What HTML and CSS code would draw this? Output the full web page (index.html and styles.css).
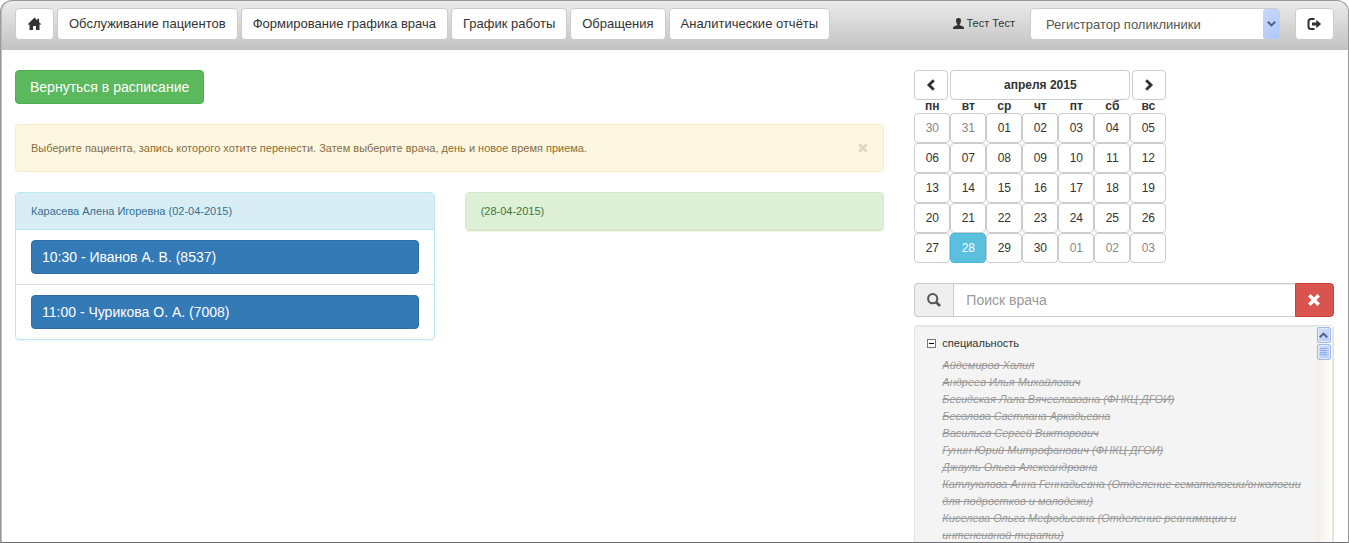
FILE: index.html
```html
<!DOCTYPE html>
<html lang="ru">
<head>
<meta charset="utf-8">
<title>Перенос записи</title>
<link rel="stylesheet" href="styles.css">
</head>
<body>
<div class="app">
  <header class="topbar">
    <nav class="nav">
      <button class="btn nav-btn" type="button" aria-label="Главная"><svg class="icon" width="15" height="14" viewBox="0 0 14 14"><path d="M7 0.5 L0 7.6 H2 V13 H5.6 V9 H8.4 V13 H12 V7.6 H14 L11.6 5.2 V1.8 H9.8 V3.4 Z"/></svg></button>
      <button class="btn nav-btn" type="button">Обслуживание пациентов</button>
      <button class="btn nav-btn" type="button">Формирование графика врача</button>
      <button class="btn nav-btn" type="button">График работы</button>
      <button class="btn nav-btn" type="button">Обращения</button>
      <button class="btn nav-btn" type="button">Аналитические отчёты</button>
    </nav>
    <div class="session">
      <span class="user"><svg class="icon" width="11" height="11" viewBox="0 0 11 11"><path d="M5.5 0 C7.4 0 8.2 1.2 8 3 C7.9 4.5 7.3 5.6 6.7 6.2 V7.1 L10 8.6 C10.8 9 11 9.6 11 11 H0 C0 9.6 .2 9 1 8.6 L4.3 7.1 V6.2 C3.7 5.6 3.1 4.5 3 3 C2.8 1.2 3.6 0 5.5 0 Z"/></svg>Тест Тест</span>
      <div class="role">
        <select class="role-select" aria-label="Роль"><option>Регистратор поликлиники</option></select>
        <span class="role-arrow"><svg width="9" height="6" viewBox="0 0 9 6"><path d="M0.8 0.8 L4.5 4.4 L8.2 0.8" fill="none" stroke="#4d6185" stroke-width="2"/></svg></span>
      </div>
      <button class="btn nav-btn" type="button" aria-label="Выход"><svg class="icon" width="15" height="12" viewBox="0 0 14 12"><path d="M7 1 H3.5 Q1 1 1 3.5 V8.5 Q1 11 3.5 11 H7" fill="none" stroke="#333" stroke-width="2"/><path d="M4.5 4.5 H8.8 V1.8 L13.6 6 L8.8 10.2 V7.5 H4.5 Z"/></svg></button>
    </div>
  </header>

  <main class="columns">
    <section class="col">
      <button class="btn btn-success" type="button">Вернуться в расписание</button>
      <div class="alert">
        <span>Выберите пациента, запись которого хотите перенести. Затем выберите врача, день и новое время приема.</span>
        <button class="alert-close" type="button" aria-label="Закрыть"><svg width="10" height="10" viewBox="0 0 10 10"><path d="M1.2 1.2 L8.8 8.8 M8.8 1.2 L1.2 8.8" stroke="#e2d9bd" stroke-width="3"/></svg></button>
      </div>
      <div class="panels">
        <div class="panel panel-info">
          <div class="panel-heading">Карасева Алена Игоревна (02-04-2015)</div>
          <ul class="appointments">
            <li><button class="btn btn-primary" type="button">10:30 - Иванов А. В. (8537)</button></li>
            <li><button class="btn btn-primary" type="button">11:00 - Чурикова О. А. (7008)</button></li>
          </ul>
        </div>
        <div class="panel panel-success">
          <div class="panel-heading">(28-04-2015)</div>
        </div>
      </div>
    </section>

    <aside class="col side">
      <div class="calendar">
        <div class="calendar-head">
          <button class="btn cal-nav" type="button" aria-label="Предыдущий месяц"><svg class="icon" width="10" height="12" viewBox="0 0 10 12"><path d="M7.8 1.3 L3 6 L7.8 10.7" fill="none" stroke="#333" stroke-width="2.9"/></svg></button>
          <button class="btn cal-title" type="button">апреля 2015</button>
          <button class="btn cal-nav" type="button" aria-label="Следующий месяц"><svg class="icon" width="10" height="12" viewBox="0 0 10 12"><path d="M2.2 1.3 L7 6 L2.2 10.7" fill="none" stroke="#333" stroke-width="2.9"/></svg></button>
        </div>
        <table class="days">
          <thead><tr><th>пн</th><th>вт</th><th>ср</th><th>чт</th><th>пт</th><th>сб</th><th>вс</th></tr></thead>
          <tbody>
            <tr><td><button class="btn day muted">30</button></td><td><button class="btn day muted">31</button></td><td><button class="btn day">01</button></td><td><button class="btn day">02</button></td><td><button class="btn day">03</button></td><td><button class="btn day">04</button></td><td><button class="btn day">05</button></td></tr>
            <tr><td><button class="btn day">06</button></td><td><button class="btn day">07</button></td><td><button class="btn day">08</button></td><td><button class="btn day">09</button></td><td><button class="btn day">10</button></td><td><button class="btn day">11</button></td><td><button class="btn day">12</button></td></tr>
            <tr><td><button class="btn day">13</button></td><td><button class="btn day">14</button></td><td><button class="btn day">15</button></td><td><button class="btn day">16</button></td><td><button class="btn day">17</button></td><td><button class="btn day">18</button></td><td><button class="btn day">19</button></td></tr>
            <tr><td><button class="btn day">20</button></td><td><button class="btn day">21</button></td><td><button class="btn day">22</button></td><td><button class="btn day">23</button></td><td><button class="btn day">24</button></td><td><button class="btn day">25</button></td><td><button class="btn day">26</button></td></tr>
            <tr><td><button class="btn day">27</button></td><td><button class="btn day selected">28</button></td><td><button class="btn day">29</button></td><td><button class="btn day">30</button></td><td><button class="btn day muted">01</button></td><td><button class="btn day muted">02</button></td><td><button class="btn day muted">03</button></td></tr>
          </tbody>
        </table>
      </div>

      <div class="search">
        <label class="search-addon" for="doctor" aria-label="Поиск"><svg width="14" height="14" viewBox="0 0 14 14"><circle cx="5.7" cy="5.7" r="4.6" fill="none" stroke="#555" stroke-width="2"/><path d="M9 9 L13 13" stroke="#555" stroke-width="2.6"/></svg></label>
        <input class="search-input" id="doctor" type="text" placeholder="Поиск врача">
        <button class="btn btn-danger" type="button" aria-label="Очистить"><svg width="12" height="12" viewBox="0 0 12 12"><path d="M1.3 1.3 L10.7 10.7 M10.7 1.3 L1.3 10.7" stroke="#fff" stroke-width="3.6"/></svg></button>
      </div>

      <div class="doctors">
        <div class="tree">
          <div class="tree-head"><button class="toggle" type="button" aria-label="Свернуть"></button><span>специальность</span></div>
          <ul class="tree-list">
            <li>Айдемиров Халил</li>
            <li>Андреев Илья Михайлович</li>
            <li>Бесидская Лала Вячеславовна (ФНКЦ ДГОИ)</li>
            <li>Бесолова Светлана Аркадьевна</li>
            <li>Васильев Сергей Викторович</li>
            <li>Гунин Юрий Митрофанович (ФНКЦ ДГОИ)</li>
            <li>Джауль Ольга Александровна</li>
            <li>Катлуюлова Анна Геннадьевна (Отделение гематологии/онкологии для подростков и молодежи)</li>
            <li>Киселева Ольга Мефодьевна (Отделение реанимации и интенсивной терапии)</li>
          </ul>
        </div>
        <div class="scrollbar">
          <div class="scroll-btn"><svg width="9" height="6" viewBox="0 0 9 6"><path d="M0.8 5.2 L4.5 1.6 L8.2 5.2" fill="none" stroke="#4d6185" stroke-width="2"/></svg></div>
          <div class="scroll-btn"><svg width="8" height="8" viewBox="0 0 8 8"><path d="M0 .5 H7 M0 2.5 H7 M0 4.5 H7 M0 6.5 H7" stroke="#8caee8"/></svg></div>
        </div>
      </div>
    </aside>
  </main>
</div>
</body>
</html>
```
FILE: styles.css
```css
* { box-sizing: border-box; }

body {
  margin: 0;
  background: #fff;
  color: #333;
  font: 11px/16px "Liberation Sans", Arial, sans-serif;
}

.app {
  display: flex;
  flex-direction: column;
  height: 100vh;
  overflow: hidden;
  border-radius: 12px 12px 0 0;
}

/* Window outline laid over the page edges */
.app::after {
  content: "";
  position: fixed;
  inset: 0;
  border: 1px solid #9a9a9a;
  border-bottom-color: #6e6e72;
  border-radius: 12px 12px 0 0;
  box-shadow: inset 1px 0 0 #bcbcbc;
  pointer-events: none;
}

.icon { fill: #333; }

.btn {
  display: inline-flex;
  align-items: center;
  justify-content: center;
  margin: 0;
  padding: 6px 14px;
  border: 1px solid #ccc;
  border-radius: 4px;
  background: #fff;
  color: #333;
  font: 14px/20px "Liberation Sans", Arial, sans-serif;
  white-space: nowrap;
}

.topbar {
  display: flex;
  flex: none;
  justify-content: space-between;
  height: 50px;
  padding: 8px 15px 0;
  background: linear-gradient(#ececec, #c2c2c2);
}

.nav { display: flex; align-items: flex-start; gap: 3px; }
.nav-btn { height: 32px; padding: 6px 11px; font-size: 13px; line-height: 18px; }

.session { display: flex; align-items: flex-start; gap: 15px; }
.user { display: flex; align-items: center; gap: 2px; height: 30px; }

.role { position: relative; width: 250px; height: 32px; }
.role-select {
  width: 100%;
  height: 100%;
  padding: 0 15px;
  border: 1px solid #ccc;
  border-radius: 4px;
  appearance: none;
  background: #fff;
  color: #555;
  font: 13px "Liberation Sans", Arial, sans-serif;
}
.role-arrow {
  position: absolute;
  top: 1px;
  right: 1px;
  bottom: 1px;
  display: flex;
  align-items: center;
  justify-content: center;
  width: 16px;
  border-radius: 2px;
  background: linear-gradient(135deg, #c9d8fc, #aec8f7);
  pointer-events: none;
}

.columns {
  display: grid;
  flex: 1;
  grid-template-columns: 2fr 1fr;
  min-height: 0;
  padding-top: 20px;
}
.col { min-width: 0; min-height: 0; padding: 0 15px; }
.side { display: flex; flex-direction: column; }

.btn-success { border-color: #4cae4c; background: #5cb85c; color: #fff; }
.btn-danger { width: 39px; padding: 0; border-color: #d43f3a; border-radius: 0 4px 4px 0; background: #d9534f; }

.alert {
  display: flex;
  align-items: center;
  justify-content: space-between;
  margin: 20px 0;
  padding: 15px;
  border: 1px solid #faebcc;
  border-radius: 4px;
  background: #fdf7e2;
  color: #8a6d3b;
}
.alert-close { display: flex; padding: 0; border: 0; background: none; }

.panels { display: grid; grid-template-columns: 1fr 1fr; align-items: start; gap: 30px; }
.panel {
  overflow: hidden;
  border: 1px solid;
  border-radius: 4px;
  background: #fff;
  box-shadow: 0 1px 1px rgba(0, 0, 0, .05);
}
.panel-heading { padding: 10px 15px; border-bottom: 1px solid; }
.panel-info, .panel-info .panel-heading { border-color: #bce8f1; }
.panel-info .panel-heading { background: #d9edf7; color: #31708f; }
.panel-success, .panel-success .panel-heading { border-color: #d6e9c6; }
.panel-success .panel-heading { background: #dff0d8; color: #3c763d; }

.appointments { margin: 0; padding: 0; list-style: none; }
.appointments li { padding: 10px 15px; }
.appointments li + li { border-top: 1px solid #ddd; }
.btn-primary {
  width: 100%;
  justify-content: flex-start;
  padding: 6px 10px;
  border-color: #2e6da4;
  background: #337ab7;
  color: #fff;
}

.calendar { width: 252px; }
.calendar-head { display: flex; gap: 2px; }
.calendar-head .btn { height: 30px; font-size: 12px; }
.cal-nav { width: 34px; padding: 0; }
.calendar-head .cal-title { flex: 1; font-weight: bold; }
.days { width: 100%; border-collapse: collapse; table-layout: fixed; }
.days th { height: 13px; padding: 0; font-size: 12px; line-height: 13px; }
.days td { padding: 0; }
.day { display: flex; width: 100%; height: 30px; padding: 0; font-size: 12px; }
.muted { color: #888; }
.selected { border-color: #46b8da; background: #5bc0de; color: #fff; }

.search { display: flex; flex: none; height: 34px; margin: 20px 0 8px; }
.search-addon {
  display: flex;
  align-items: center;
  justify-content: center;
  width: 39px;
  border: 1px solid #ccc;
  border-right: 0;
  border-radius: 4px 0 0 4px;
  background: #eee;
}
.search-input {
  flex: 1;
  min-width: 0;
  padding: 6px 12px;
  border: 1px solid #ccc;
  border-right: 0;
  background: #fff;
  box-shadow: inset 0 1px 1px rgba(0, 0, 0, .08);
  color: #555;
  font: 14px/20px "Liberation Sans", Arial, sans-serif;
}
.search-input::placeholder { color: #999; opacity: 1; }

.doctors {
  display: flex;
  flex: 1;
  min-height: 0;
  overflow: hidden;
  border: 1px solid #e3e3e3;
  border-bottom: 0;
  border-radius: 4px 4px 0 0;
  background: #f4f4f4;
  box-shadow: inset 0 1px 1px rgba(0, 0, 0, .05);
}
.tree { flex: 1; padding: 9px 12px 0; }
.tree-head { display: flex; align-items: center; gap: 6px; }
.toggle {
  width: 9px;
  height: 9px;
  padding: 0;
  border: 1px solid #777;
  background: linear-gradient(#000, #000) center / 5px 1px no-repeat #fff;
}
.tree-list {
  margin: 6px 0 0 15px;
  padding: 0;
  color: #999;
  font-style: italic;
  line-height: 17px;
  list-style: none;
  text-decoration: line-through;
}

.scrollbar {
  width: 17px;
  padding: 1px;
  border-right: 1px solid #e9e9e2;
  background: linear-gradient(90deg, #f0f0e8, #fefefa);
}
.scroll-btn {
  display: flex;
  align-items: center;
  justify-content: center;
  height: 16px;
  margin-bottom: 1px;
  border: 1px solid #9fb8e6;
  border-radius: 2px;
  background: linear-gradient(135deg, #cfdcfd, #b5cbf9);
  box-shadow: inset 0 0 0 1px #e3ebfe;
}
```
